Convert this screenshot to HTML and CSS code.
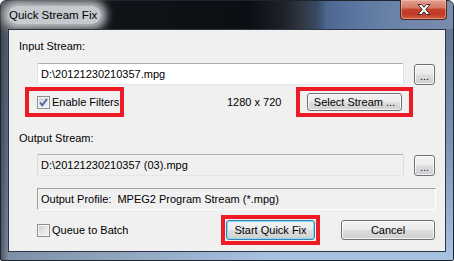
FILE: index.html
```html
<!DOCTYPE html>
<html>
<head>
<meta charset="utf-8">
<link rel="stylesheet" href="styles.css">
</head>
<body>
<div class="window">
  <div class="titlebar">
    <span class="title">Quick Stream Fix</span>
    <div class="close">
      <svg width="14" height="11" viewBox="0 0 14 11"><path d="M1 0.5 H4.5 L7 3.3 L9.5 0.5 H13 L8.8 5.5 L13 10.5 H9.5 L7 7.7 L4.5 10.5 H1 L5.2 5.5 Z" fill="#fff" stroke="#3a2a2a" stroke-width="1" stroke-linejoin="round"/></svg>
    </div>
  </div>
  <div class="client">
    <div class="label lbl-in">Input Stream:</div>
    <div class="field-row">
      <div class="field">D:\20121230210357.mpg</div>
      <div class="btn browse">...</div>
    </div>
    <div class="filter-row">
      <div class="hl hl-check">
        <span class="cb"><svg width="11" height="11" viewBox="0 0 11 11"><path d="M2 5.5 L4.3 8.3 L9 2" fill="none" stroke="#4a5fa0" stroke-width="1.8"/></svg></span>
        <span class="cb-text">Enable Filters</span>
      </div>
      <span class="res">1280 x 720</span>
      <div class="hl hl-select">
        <div class="btn select">Select Stream ...</div>
      </div>
    </div>
    <div class="label lbl-out">Output Stream:</div>
    <div class="field-row row-out">
      <div class="field disabled">D:\20121230210357 (03).mpg</div>
      <div class="btn browse dim">...</div>
    </div>
    <div class="profile">Output Profile:  MPEG2 Program Stream (*.mpg)</div>
    <div class="bottom-row">
      <div class="queue">
        <span class="cb"></span>
        <span class="cb-text">Queue to Batch</span>
      </div>
      <div class="hl hl-start">
        <div class="btn default">Start Quick Fix</div>
      </div>
      <div class="btn cancel">Cancel</div>
    </div>
  </div>
</div>
</body>
</html>
```

FILE: styles.css
```css
html, body {
  margin: 0;
  padding: 0;
  width: 454px;
  height: 261px;
  overflow: hidden;
  background: #fff;
}

.window {
  box-sizing: border-box;
  width: 454px;
  height: 261px;
  padding: 0 7px 8px 7px;
  border: 1px solid #1e242c;
  border-radius: 6px 6px 2px 2px;
  background:
    linear-gradient(90deg, rgba(50,54,60,0.75) 0, rgba(50,54,60,0.35) 8px, rgba(0,0,0,0) 60%),
    linear-gradient(180deg, #5d6f8c 0%, #7d93b4 55%, #a9c3e2 100%);
  display: flex;
  flex-direction: column;
  font-family: "Liberation Sans", Arial, sans-serif;
  font-size: 11px;
  color: #000;
}

.titlebar {
  height: 28px;
  margin: 0 -7px;
  padding: 0 6px 0 7px;
  display: flex;
  justify-content: space-between;
  align-items: flex-start;
  border-radius: 5px 5px 0 0;
  background: linear-gradient(90deg,
    #4a4e54 0%, #24282e 8%, #101418 25%, #0b0f14 55%,
    #1c2028 62%, #2e343c 66%, #3a4a66 70%, #4c6690 72%,
    #5e7aa2 80%, #6f86aa 90%, #7a8cac 100%);
}

.title {
  margin-top: 5px;
  padding: 2px 4px 1px 1px;
  font-size: 11.5px;
  line-height: 15px;
  color: #000;
  border-radius: 8px;
  background: rgba(212,216,220,0.92);
  box-shadow: 0 0 8px 5px rgba(212,216,220,0.9);
}

.close {
  box-sizing: border-box;
  width: 47px;
  height: 20px;
  margin-top: -1px;
  border: 1px solid #4c2a24;
  border-top: none;
  border-radius: 0 0 4px 4px;
  background: linear-gradient(180deg, #e2a192 0%, #d67a66 40%, #c4412c 50%, #c03a26 75%, #d0603e 100%);
  box-shadow: inset 0 0 0 1px rgba(255,210,200,0.45);
  display: flex;
  align-items: center;
  justify-content: center;
}

.client {
  flex: 1;
  border: 1px solid #2c3644;
  background: #f0f0f0;
  display: flex;
  flex-direction: column;
}

.label {
  height: 13px;
  line-height: 13px;
  margin-left: 10px;
  white-space: nowrap;
}

.lbl-in { margin-top: 10px; }
.lbl-out { margin-top: 15px; }

.field-row {
  display: flex;
  align-items: flex-start;
  margin-top: 10px;
  height: 22px;
}
.row-out { margin-top: 9px; }

.field {
  box-sizing: border-box;
  width: 367px;
  height: 22px;
  margin-left: 28px;
  padding-left: 3px;
  line-height: 20px;
  background: #fff;
  border: 1px solid;
  border-color: #abadb3 #dbdfe6 #e3e9ef #e2e3ea;
  border-radius: 2px;
  white-space: nowrap;
}
.field.disabled {
  background: #f0f0f0;
  border-color: #adb2b5 #dadada #e6e6e6 #dadada;
}

.btn {
  box-sizing: border-box;
  border: 1px solid #707070;
  border-radius: 3px;
  background: linear-gradient(180deg, #f2f2f2 0%, #ebebeb 48%, #dddddd 52%, #cfcfcf 100%);
  box-shadow: inset 0 0 0 1px rgba(252,252,252,0.85);
  display: flex;
  align-items: center;
  justify-content: center;
  white-space: nowrap;
}

.browse {
  width: 21px;
  height: 21px;
  margin-left: 10px;
  margin-top: 1px;
  padding-top: 3px;
  letter-spacing: 0;
}
.browse.dim { color: #1c1a78; }

.filter-row {
  display: flex;
  align-items: center;
  margin-top: 2px;
  height: 30px;
}

.hl {
  box-sizing: border-box;
  height: 30px;
  flex: none;
  border: 4px solid #ed1c24;
  display: flex;
  align-items: center;
}

.hl-check {
  width: 99px;
  margin-left: 16px;
  padding-left: 8px;
}

.cb {
  box-sizing: border-box;
  width: 13px;
  height: 13px;
  flex: none;
  border: 1px solid #8e8f8f;
  background: linear-gradient(135deg, #c9cdd2 0%, #e6e8ea 60%, #f4f4f4 100%);
  box-shadow: inset 0 0 0 1px #f4f4f4;
  display: flex;
  align-items: center;
  justify-content: center;
}

.cb-text {
  margin-left: 2px;
  white-space: nowrap;
}

.res {
  width: 69px;
  flex: none;
  margin-left: 103px;
  white-space: nowrap;
}

.hl-select {
  width: 117px;
  padding-left: 7px;
}

.select {
  width: 95px;
  height: 18px;
}

.profile {
  box-sizing: border-box;
  width: 399px;
  height: 22px;
  margin-top: 12px;
  margin-left: 28px;
  padding-left: 3px;
  line-height: 20px;
  border: 1px solid;
  border-color: #a0a0a0 #ffffff #ffffff #a0a0a0;
  white-space: pre;
}

.bottom-row {
  display: flex;
  align-items: center;
  margin-top: 5px;
  height: 30px;
}

.queue {
  width: 184px;
  flex: none;
  margin-left: 28px;
  display: flex;
  align-items: center;
}

.hl-start {
  width: 99px;
  padding-left: 1px;
}

.default {
  width: 89px;
  height: 20px;
  border-color: #3c7fb1;
  box-shadow: inset 0 0 0 1px #7fdcf8;
}

.cancel {
  width: 94px;
  height: 20px;
  flex: none;
  margin-left: 21px;
}
```
